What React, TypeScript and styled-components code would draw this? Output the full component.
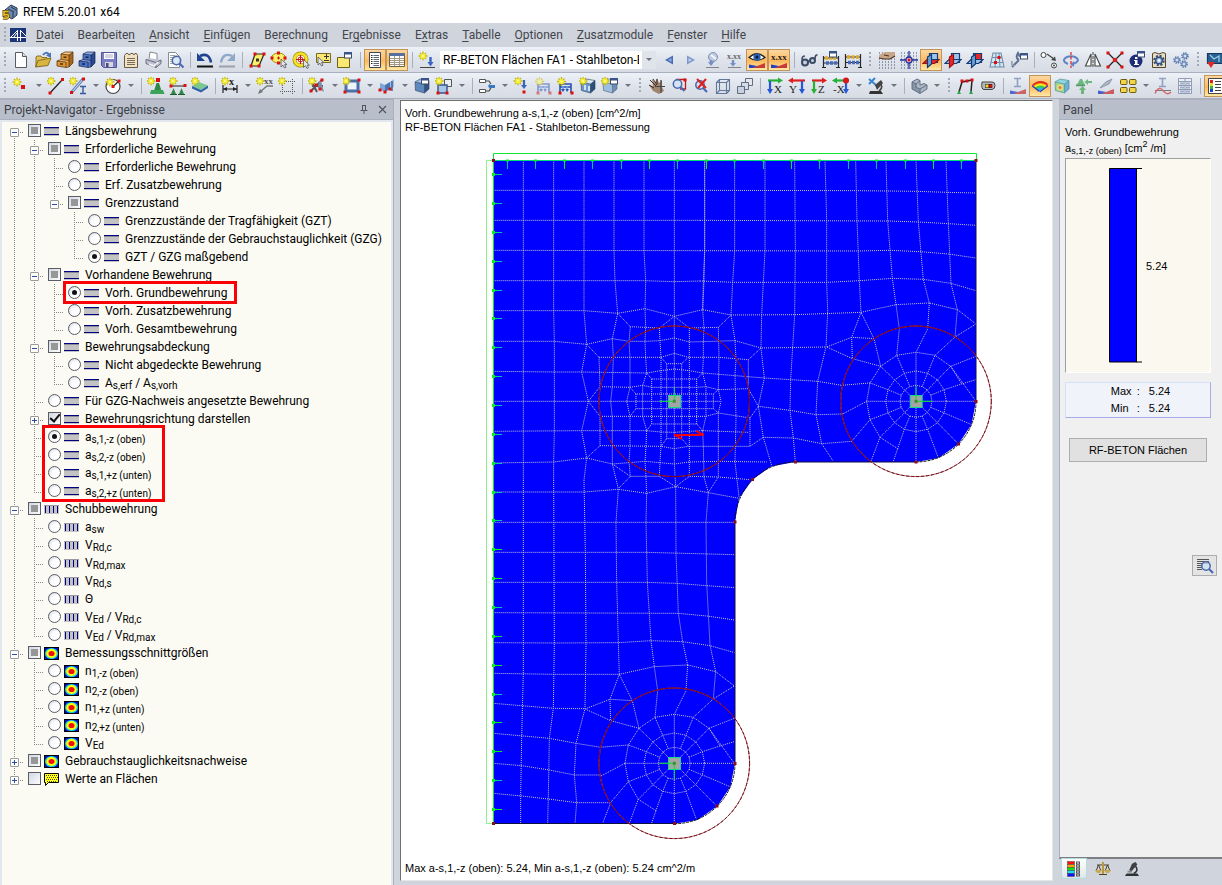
import React, { Fragment, ReactNode } from "react";
import styled, { createGlobalStyle, css } from "styled-components";

const UI_FONT = 'Roboto, "Noto Sans", sans-serif';
const PLAIN_FONT = '"Liberation Sans", Arial, sans-serif';

const GlobalStyle = createGlobalStyle`
  * { box-sizing: border-box; }
  html, body, #root { height: 100%; }
  body { margin: 0; background: #cfd4dd; font: 12px/18px ${UI_FONT}; color: #000; overflow: hidden; }
  button, input, select { font: inherit; color: inherit; margin: 0; }
`;

/* ---------- frame ---------- */

const Window = styled.div`
  display: flex;
  flex-direction: column;
  height: 100vh;
  min-height: 600px;
`;

const TitleBar = styled.header`
  display: flex;
  align-items: center;
  gap: 5px;
  height: 23px;
  padding-left: 2px;
  background: #fff;
  flex: none;
`;

const Title = styled.h1`
  margin: 0;
  font-size: 12px;
  line-height: 18px;
  font-weight: 400;
`;

const Grip = styled.span<{ $wide?: boolean }>`
  flex: none;
  width: ${(p) => (p.$wide ? 12 : 10)}px;
  height: 16px;
  padding-left: ${(p) => (p.$wide ? 5 : 4)}px;
  &::before {
    content: "";
    display: block;
    width: 2px;
    height: 16px;
    background: repeating-linear-gradient(to bottom, #a3a9b6 0 2px, transparent 2px 4px);
  }
`;

const MenuBar = styled.nav`
  display: flex;
  align-items: center;
  height: 24px;
  flex: none;
  background: #cfd4dd;
`;

const MenuItem = styled.button`
  border: 0;
  padding: 0;
  margin-right: 14px;
  background: none;
  color: #43454b;
  line-height: 18px;
  white-space: nowrap;
  u { text-underline-offset: 2px; }
`;

const MenuLogo = styled.span`
  display: flex;
  margin-right: 10px;
`;

const ToolBar = styled.div`
  display: flex;
  align-items: center;
  height: 26px;
  flex: none;
  overflow: hidden;
  border-bottom: 1px solid #aab0bd;
  background: linear-gradient(#edf1f8, #dfe4ec 50%, #d6dbe4);
`;

const ToolButton = styled.button<{ $active?: boolean }>`
  display: flex;
  align-items: center;
  justify-content: center;
  flex: none;
  width: 22px;
  height: 22px;
  padding: 0;
  border: 1px solid transparent;
  background: none;
  ${(p) =>
    p.$active &&
    css`
      border-color: #c2935a;
      background: linear-gradient(#fbd7a0, #fdb95c 55%, #ffe9a6);
    `}
`;

const DropButton = styled.button`
  display: flex;
  align-items: center;
  justify-content: center;
  flex: none;
  width: 13px;
  height: 22px;
  padding: 0;
  border: 0;
  background: none;
`;

const Caret = styled.span`
  border: 3px solid transparent;
  border-top-color: #70747c;
  border-bottom: 0;
`;

const Separator = styled.span`
  flex: none;
  width: 8px;
  height: 16px;
  padding-left: 4px;
  &::before {
    content: "";
    display: block;
    width: 1px;
    height: 16px;
    background: #a9afbb;
  }
`;

const Combo = styled.label`
  display: flex;
  align-items: center;
  flex: none;
  width: 216px;
  height: 18px;
  margin: 0 2px;
  background: #fff;
`;

const ComboSelect = styled.select`
  appearance: none;
  width: 202px;
  height: 18px;
  padding: 0 3px;
  border: 0;
  background: #fff;
  line-height: 18px;
`;

const ComboArrow = styled.span`
  display: flex;
  align-items: center;
  justify-content: center;
  flex: 1;
  height: 18px;
  background: #dfe3ea;
`;

const Workspace = styled.main`
  display: flex;
  flex: 1;
  min-height: 0;
`;

/* ---------- navigator ---------- */

const Navigator = styled.aside`
  display: flex;
  flex-direction: column;
  flex: none;
  width: 394px;
  border-right: 1px solid #aab0bd;
`;

const PaneHeader = styled.div`
  display: flex;
  align-items: center;
  gap: 10px;
  height: 21px;
  flex: none;
  padding: 0 6px 0 4px;
  border-top: 1px solid #aab0bd;
  border-bottom: 1px solid #a9b0c0;
  background: #b8bfcb;
  color: #3c4048;
`;

const PaneTitle = styled.h2`
  flex: 1;
  margin: 0;
  font-size: 12px;
  line-height: 18px;
  font-weight: 400;
  white-space: nowrap;
`;

const PaneButton = styled.button`
  display: flex;
  padding: 0;
  border: 0;
  background: none;
`;

const TreePane = styled.div`
  position: relative;
  flex: 1;
  min-height: 0;
  overflow: hidden;
  border: 2px solid #e3e7f0;
  border-bottom: 0;
  background: #fcfbf3;
`;

const TreeList = styled.ul`
  margin: 0;
  padding: 0 0 0 2px;
  list-style: none;
`;

const TreeRow = styled.li`
  display: flex;
  align-items: center;
  height: 18px;
`;

const DOT_V = "repeating-linear-gradient(to bottom, #8a8a8a 0 1px, transparent 1px 2px)";
const DOT_H = "repeating-linear-gradient(to right, #8a8a8a 0 1px, transparent 1px 2px)";

const Guide = styled.span<{ $line: "none" | "full" | "half" | "lower"; $arm?: boolean }>`
  display: flex;
  align-items: center;
  justify-content: center;
  flex: none;
  width: 20px;
  height: 18px;
  padding-left: 1px;
  padding-top: 2px;
  background-repeat: no-repeat;
  background-image: ${(p) =>
    [p.$line === "none" ? "" : DOT_V, p.$arm ? DOT_H : ""].filter(Boolean).join(", ") || "none"};
  background-size: ${(p) =>
    [p.$line === "none" ? "" : p.$line === "full" ? "1px 18px" : "1px 10px", p.$arm ? "10px 1px" : ""]
      .filter(Boolean)
      .join(", ") || "auto"};
  background-position: ${(p) =>
    [p.$line === "none" ? "" : p.$line === "lower" ? "10px 10px" : "10px 0", p.$arm ? "10px 10px" : ""]
      .filter(Boolean)
      .join(", ") || "0 0"};
`;

const Expander = styled.button`
  display: flex;
  width: 9px;
  height: 9px;
  padding: 0;
  border: 1px solid #9a9a9a;
  border-radius: 1px;
  background: #fff;
`;

const NodeLabel = styled.label`
  display: flex;
  align-items: center;
  height: 18px;
  padding-left: 4px;
`;

const NodeText = styled.span`
  padding-left: 6px;
  white-space: nowrap;
`;

const Low = styled.small`
  position: relative;
  top: 2px;
  font-size: 10px;
  line-height: 10px;
`;

const markBase = css`
  appearance: none;
  display: flex;
  align-items: center;
  justify-content: center;
  flex: none;
  width: 13px;
  height: 13px;
  margin: 0 3px 2px 0;
  border: 1px solid #5a5c66;
`;

const CheckMark = styled.input<{ $mixed?: boolean }>`
  &&{ ${markBase} }
  background: linear-gradient(135deg, #d3d8e2, #fbfcfe);
  ${(p) =>
    p.$mixed &&
    css`
      &::after { content: ""; width: 7px; height: 7px; background: #979797; }
    `}
  &:checked::after {
    content: "";
    width: 4px;
    height: 8px;
    margin-top: -2px;
    border: solid #111;
    border-width: 0 2px 2px 0;
    rotate: 40deg;
  }
`;

const RadioMark = styled.input`
  &&{ ${markBase} }
  border-radius: 50%;
  background: radial-gradient(circle at 65% 65%, #fff 40%, #cdd3de);
  &:checked::after { content: ""; width: 5px; height: 5px; border-radius: 50%; background: #111; }
`;

const Highlight = styled.span<{ $row: number; $rows: number; $left: number; $width: number }>`
  position: absolute;
  top: ${(p) => p.$row * 18 - 3}px;
  left: ${(p) => p.$left}px;
  width: ${(p) => p.$width}px;
  height: ${(p) => p.$rows * 18 + 5}px;
  border: 3px solid #fb0007;
  pointer-events: none;
`;

/* ---------- model view ---------- */

const View = styled.section`
  display: flex;
  flex-direction: column;
  flex: 1;
  min-width: 0;
  margin: 1px 6px 4px 6px;
  border: 1px solid #6f6f6f;
  border-right-color: #e6e6e6;
  border-bottom-color: #e6e6e6;
  background: #fff;
  font: 11px/14px ${PLAIN_FONT};
`;

const ViewCaption = styled.p`
  margin: 0;
  padding: 5px 4px 0;
  white-space: pre-line;
`;

const ViewFooter = styled.p`
  margin: 0;
  padding: 0 4px 5px;
`;

const Drawing = styled.div`
  flex: 1;
  min-height: 0;
  padding: 11px 0 0 79px;
  svg { display: block; max-width: 100%; }
`;

/* ---------- result panel ---------- */

const Panel = styled.aside`
  display: flex;
  flex-direction: column;
  flex: none;
  width: 163px;
`;

const PanelBody = styled.div`
  display: flex;
  flex-direction: column;
  flex: 1;
  min-height: 0;
  padding: 4px 11px 0 5px;
  border-left: 1px solid #a9b0c0;
  border-bottom: 2px solid #7d7f84;
  background: #f0f0f0;
  font: 11px/16px ${PLAIN_FONT};
`;

const Quantity = styled.p`
  margin: 0;
  height: 16px;
  line-height: 16px;
  white-space: nowrap;
  small, sup { font-size: 9px; line-height: 9px; }
`;

const Legend = styled.div`
  display: flex;
  align-items: center;
  height: 215px;
  margin-top: 2px;
  padding-left: 43px;
  gap: 4px;
  border: 1px solid #a0a0a0;
  border-right-color: #fff;
  border-bottom-color: #fff;
  background: #fbf8f0;
`;

const Extremes = styled.dl`
  display: grid;
  grid-template-columns: 26px 12px auto;
  justify-content: center;
  align-content: center;
  height: 36px;
  margin: 9px 0 0;
  padding-left: 5px;
  border: 1px solid #d6e0f8;
  border-right-color: #a9a9ee;
  border-bottom-color: #a9a9ee;
  background: #f0f3fa;
  line-height: 17px;
  dd, dt { margin: 0; }
`;

const ModuleButton = styled.button`
  height: 24px;
  margin: 20px 4px 0;
  padding: 0;
  border: 1px solid #adadad;
  background: #e1e1e1;
`;

const FilterButton = styled.button`
  display: flex;
  align-items: center;
  justify-content: center;
  align-self: flex-end;
  width: 25px;
  height: 21px;
  margin: 93px -6px 0 0;
  padding: 0;
  border: 1px solid #adadad;
  background: #e4e4e4;
`;

const PanelTabs = styled.div`
  display: flex;
  align-items: flex-start;
  gap: 5px;
  height: 26px;
  flex: none;
  padding-left: 3px;
`;

const PanelTab = styled.button<{ $active?: boolean }>`
  display: flex;
  align-items: center;
  justify-content: center;
  width: 24px;
  height: 19px;
  padding: 0;
  border: 0;
  border-radius: 0 0 3px 3px;
  background: ${(p) => (p.$active ? "linear-gradient(#fff, #dfe6ea)" : "none")};
  ${(p) => p.$active && css`box-shadow: 0 0 0 1px #b4dcdc;`}
`;

/* ---------- icons ---------- */

const L = (d: string, c: string, w = 1, f = "none") => <path d={d} stroke={c} strokeWidth={w} fill={f} />;
const F = (d: string, f: string) => <path d={d} fill={f} />;
const Node = ({ x, y, c = "#dc1010" }: { x: number; y: number; c?: string }) => (
  <rect x={x - 1.5} y={y - 1.5} width="3" height="3" fill={c} />
);
const Star = ({ x = 4.5, y = 4.5 }: { x?: number; y?: number }) => (
  <g transform={`translate(${x} ${y})`}>
    <path d="M0-4.5V4.5M-4.5 0H4.5M-3-3L3 3M3-3L-3 3" stroke="#c2b400" strokeWidth="1.3" />
    <circle r="2.6" fill="#f7ee2a" />
    <circle r="1" fill="#fffbb0" />
  </g>
);
const Letters = ({ x, y, c = "#222", s = 7, bold = true, children }: { x: number; y: number; c?: string; s?: number; bold?: boolean; children: string }) => (
  <text x={x} y={y} fill={c} fontSize={s} fontWeight={bold ? 700 : 400} fontFamily="Liberation Serif, serif">
    {children}
  </text>
);
const Cursor = ({ x, y }: { x: number; y: number }) => (
  <path transform={`translate(${x} ${y})`} d="M0 0V8L2 6.2L3.5 9L5 8.2L3.6 5.6H6Z" fill="#e4e4e8" stroke="#555" strokeWidth=".8" />
);
const Ramp = () => (
  <>
    {F("M1 17V13.5L9 15Z", "#2440c8")}
    {F("M9 15L17 12V17H1Z", "#c83a3a")}
    {F("M1 14.5L9 15.5L4 17H1Z", "#2440c8")}
  </>
);
const Lens = ({ x, y }: { x: number; y: number }) => (
  <>
    <circle cx={x} cy={y} r="4.2" fill="#cfe0f6" fillOpacity=".75" stroke="#4a68a8" strokeWidth="1.5" />
    <path d={`M${x + 3} ${y + 3}L${x + 7} ${y + 7}`} stroke="#4a68b8" strokeWidth="2.2" />
  </>
);
const Cube = ({ top, left, right }: { top: string; left: string; right: string }) => (
  <>
    {F("M2 5L7 2L16 3.5L11.5 7Z", top)}
    {F("M2 5L11.5 7V16L2.5 13.5Z", left)}
    {F("M11.5 7L16 3.5V12L11.5 16Z", right)}
    {L("M2 5L7 2L16 3.5V12L11.5 16L2.5 13.5ZM2 5L11.5 7L16 3.5M11.5 7V16", "#2c3c58", 0.6)}
  </>
);
/* filing cabinet with two drawers, the lower one pulled out */
const Cabinet = ({ top, front, side, line }: { top: string; front: string; side: string; line: string }) => (
  <>
    {F("M5 3L9 1H17L13 4Z", top)}
    {F("M5 3L13 4V16L5 15Z", front)}
    {F("M13 4L17 1V12L13 16Z", side)}
    {F("M1 10L5 8.500L11 9.500V16.500L1 15Z", front)}
    {F("M1 10L5 8.500L13 9.500L10 11Z", top)}
    {L("M5 8V3L9 1H17V12L13 16L10 16.500L1 15V10L5 8.500L13 9.500M5 3L13 4L17 1M13 4V16M1 10L10 11V16.500", line, 0.7)}
    {L("M7.500 6.300H10.500M4 13H7", line, 1.6)}
  </>
);
const WinMark = ({ x = 9, y = 1 }: { x?: number; y?: number }) => (
  <>
    <rect x={x + 0.5} y={y + 0.5} width="7" height="5.5" fill="#fff" stroke="#3b4a6a" />
    <rect x={x} y={y} width="8" height="2.5" fill="#3c5588" />
  </>
);
/* three crossing work planes, one of them marked red */
const Planes = ({ hot }: { hot: number }) => (
  <>
    {L("M7.500 2.500H15.500V11.500H7.500Z", "#143a74", 1.2, hot === 2 ? "#e82828" : "#9cc4ec")}
    {L("M1 12.500L5 8.500H17L12.500 12.500Z", hot === 0 ? "#a01010" : "#143a74", 1.2, hot === 0 ? "#e82828" : "#9cc4ec")}
    {L("M5.500 6L9.500 3.500V13L5.500 16.500Z", hot === 1 ? "#a01010" : "#143a74", 1.2, hot === 1 ? "#e82828" : "#6c9fd8")}
    {L("M9.500 8.500H17", "#143a74", 1)}
  </>
);
const Gear = ({ x, y, r, c = "#5878ac" }: { x: number; y: number; r: number; c?: string }) => (
  <g transform={`translate(${x} ${y})`}>
    <circle r={r} fill="none" stroke={c} strokeWidth={r * 0.55} strokeDasharray={`${r * 0.45} ${r * 0.335}`} />
    <circle r={r * 0.72} fill="#a9bfe0" stroke={c} strokeWidth={r * 0.3} />
    <circle r={r * 0.28} fill="#fff" />
  </g>
);
const Axis = ({ name, flip, across, down, downX = 4 }: { name: string; flip?: boolean; across: string; down: string; downX?: number }) => (
  <>
    {L(flip ? "M17 3.500H4" : "M2 3.500H13", across, 2.2)}
    {F(flip ? "M5 .5V6.500L0 3.500Z" : "M12 .5V6.500L17 3.500Z", across)}
    {L(`M${downX} 4V13`, down, 2.2)}
    {F(`M${downX - 3} 12H${downX + 3}L${downX} 17Z`, down)}
    <Letters x={flip ? 1 : 8} y={16} s={11} bold={false}>{name}</Letters>
  </>
);
const Grid = ({ c = "#44506c" }: { c?: string }) => (
  <path d="M1 2H17M1 5H17M1 8H17M1 11H17M1 14H17M1 17H17" stroke={c} strokeDasharray="1 2" />
);
const Supports = ({ y = 10 }: { y?: number }) => (
  <>
    {F(`M2 ${y + 6}L4.5 ${y}L7 ${y + 6}ZM10 ${y + 6}L12.5 ${y}L15 ${y + 6}Z`, "#2f8a46")}
    {L(`M1 ${y + 6.5}H8M9 ${y + 6.5}H16`, "#1b5c2c")}
  </>
);
const LoadFrame = ({ soft }: { soft?: boolean }) => (
  <g opacity={soft ? 0.5 : 1}>
    {L("M3 16V7H14V16M3 10H14", "#2a50b0", 1.6)}
    {L("M6 9V13M10 9V13", "#6aa0ea", 1.5)}
    {F("M4 12H8L6 15ZM8.500 12H12L10 15Z", "#2a50b0")}
    <Node x={3} y={16} /><Node x={15} y={16} />
    <Star />
  </g>
);
const Microscope = () => (
  <>
    {F("M9 3L13 1L15 4L8 12L6 10Z", "#3d3f44")}
    {L("M13 6Q17 11 11 14", "#303236", 1.8)}
    {F("M3 14H15L17 17H1Z", "#303236")}
    {F("M4 11H9V13H4Z", "#8a8c92")}
  </>
);
const IBeam = ({ c = "#7688b8" }: { c?: string }) => L("M5 1.500H12M5 9.500H12M8.500 2V9", c, 1.6);

const GREEN = "#28b038";
const RED = "#dc2020";
const BLUE = "#2858d8";

const icons: Record<string, ReactNode> = {
  new: <>{L("M3.500 1.500H10.500L14.500 5.500V16.500H3.500Z", "#5a5c60", 1, "#fff")}{L("M10.500 1.500V5.500H14.500", "#5a5c60", 1, "#dfe3ea")}</>,
  open: <>{F("M2 16V6L3 5H7L8 6.500H14V9H6Z", "#e3c45c")}{F("M1 16L4 9.500L17 7L14 14.500Z", "#d9b440")}{L("M2 16V6L3 5H7L8 6.500H13M1.500 16L4 9.500L17 7L14 14.500Z", "#7c6418", 0.9)}{L("M9 4Q12 0 15 3.500", "#4a74b8", 2)}{F("M12 4.500L17 1.500V7Z", "#4a74b8")}</>,
  archiveOrange: <Cabinet top="#f6c888" front="#dd9434" side="#a8661c" line="#4c2c08" />,
  archiveBlue: <Cabinet top="#8fabe4" front="#4f74c4" side="#2c4a94" line="#12244c" />,
  save: <>{L("M1.500 1.500H16.500V16.500H3.500L1.500 14.500Z", "#54549a", 1, "#7d7dc6")}{F("M4 2H14V8H4Z", "#fff")}{L("M5 4H13M5 6H13", "#a9a9c8")}{F("M5 11H13V16H5Z", "#d6d6de")}{F("M6 12H8.500V16H6Z", "#4a4a78")}</>,
  tabs: <>{L("M2.500 4.500L4 2.500H6L7 4L9 2.500H11L12 4L13 2.500H14.500L15.500 4.500V16.500H2.500Z", "#6c5a40", 1, "#f1e2c4")}{L("M5 7.500H13M5 9.500H13M5 11.500H13M5 13.500H13", "#7a6a58")}</>,
  print: <>{L("M5 8L6 1L13 2.500L13 9", "#6c6c76", 0.8, "#fff")}{F("M2 8.500L5 7L17 9V12.500L12 16.500L2 12.500Z", "#c2c2d4")}{L("M2 8.500L12 11.500L17 9V12.500L12 16.500L2 12.500ZM12 11.500V16.500", "#54545e", 0.8)}{L("M5 13L10 15L14 11", "#f4f4fc", 1.6)}</>,
  preview: <>{L("M2.500 1.500H9.500L13.500 5.500V16.500H2.500Z", "#8a8c90", 1, "#fff")}{L("M4 4.500H9M4 6.500H11M4 8.500H7M4 10.500H7M4 12.500H7", "#a0a4ac")}<Lens x={10.500} y={9.500} /></>,
  undo: <>{L("M4 5Q13 1 15 11.500", "#1f4390", 2.6)}{F("M1 2V10H9Z", "#1f4390")}{L("M1 15.500H17", "#111", 2)}</>,
  redo: <>{L("M14 5Q5 1 3 11.500", "#8fa9c8", 2.4)}{F("M17 2V10H9Z", "#8fa9c8")}{L("M1 15.500H17", "#9aa2ae", 2)}</>,
  selPoly: <>{L("M3 15L7 3H16L11 15Z", "#222", 1.2, "#fdf06a")}<Node x={3} y={15} /><Node x={7} y={3} /><Node x={16} y={3} /><Node x={11} y={15} /><Node x={9.500} y={9} c="#333" /></>,
  selEllipse: <><ellipse cx="8.500" cy="7" rx="7" ry="5" fill="#fdf06a" stroke="#a08c00" /><Node x={2} y={7} /><Node x={8.500} y={2} /><Node x={15} y={7} /><Node x={8.500} y={12} />{L("M7 7H10M8.500 5.500V8.500", "#c01010")}<Cursor x={11} y={8} /></>,
  selRing: <><circle cx="8.500" cy="8.500" r="6" fill="#fff" stroke="#9c8a00" strokeWidth="4" /><circle cx="8.500" cy="8.500" r="6" fill="none" stroke="#f5e22a" strokeWidth="2.600" />{L("M8.500 4V13M4 8.500H13", "#d01818")}<circle cx="8.500" cy="8.500" r="2.500" stroke="#d01818" /><Cursor x={11.500} y={8.500} /></>,
  selSign: <>{L("M2.500 2.500H16.500V11.500H2.500Z", "#7a6c1c", 1, "#f9e874")}{L("M10 5.500H15M12.500 3V8M10 9.500H15", "#333")}<Cursor x={4} y={6} /></>,
  selWindow: <>{L("M1.500 6.500H13.500V16.500H1.500Z", "#6e6018", 1, "#f9e874")}<WinMark x={8} y={1} /></>,
  navList: <>{L("M3.500 1.500H14.500V16.500H3.500Z", "#3e4452", 1, "#fff")}{L("M7.500 4.500H13M7.500 6.500H13M7.500 8.500H13M7.500 10.500H13M7.500 12.500H13M7.500 14.500H13", "#5b6270")}{L("M5 4.500H6.500M5 6.500H6.500M5 8.500H6.500M5 10.500H6.500M5 12.500H6.500", "#222")}</>,
  table: <>{L("M1.500 2.500H16.500V15.500H1.500Z", "#6a604c", 1, "#fff")}{F("M1 2H17V5H1Z", "#5870a0")}{L("M2 7.500H16M2 9.500H16M2 11.500H16M2 13.500H16M6.500 5V15M11.500 5V15", "#a49880")}</>,
  newCase: <><Star x={5} y={5} />{L("M12.500 6V13", "#3a64c0", 2.4)}{F("M9.500 11H15.500L12.500 15.500Z", "#3a64c0")}{L("M2 16.500H17", "#444")}</>,
  prev: <>{F("M13 4.500V13.500L5 9Z", "#4a6cb8")}{F("M11.500 7V11L8 9Z", "#8faade")}</>,
  next: <>{F("M5 4.500V13.500L13 9Z", "#7c98cc")}{F("M6.500 7V11L10 9Z", "#c2d0ea")}</>,
  caseDown: <g opacity=".65"><circle cx="9" cy="6" r="4.500" fill="#a8bcdc" stroke="#4a6490" /><path d="M7 4L12 8" stroke="#fff" strokeWidth="2" />{L("M7 9V13", "#3c64b4", 2.4)}{F("M4 11H10L7 15Z", "#3c64b4")}{L("M2 16.500H15", "#555")}</g>,
  valueDown: <g opacity=".65"><Letters x={1} y={8} s={8}>x.xx</Letters>{L("M7 9V13", "#3c64b4", 2.4)}{F("M4 12H10L7 15.500Z", "#3c64b4")}{L("M2 16.500H15", "#555")}</g>,
  eye: <>{L("M1 6.500Q9 -1 17 6.500Q9 12 1 6.500Z", "#222", 1.2, "#fff")}<circle cx="9" cy="6.200" r="3.600" fill="#2860b4" /><circle cx="9" cy="6" r="1.500" fill="#081830" /><Ramp /></>,
  values: <><Letters x={1} y={9} s={9}>x.xx</Letters><Ramp /></>,
  glasses: <><circle cx="5" cy="11.500" r="3" fill="#c8d0dc" stroke="#3c4a64" strokeWidth="2" /><circle cx="12.500" cy="9.500" r="2.500" fill="#c8d0dc" stroke="#3c4a64" strokeWidth="2" />{L("M2.500 10Q1 5 5 5M8 10.500L10 9.500M15 8Q15 3.500 17.500 4", "#3c4a64", 1.6)}</>,
  abacusWin: <>{L("M1.500 5V16M16.500 5V16M1 7H17M1 12H17M0 16.500H4M14 16.500H18", "#26282e", 1.2)}<path d="M3 7H14" stroke="#dca92c" strokeWidth="3.400" strokeDasharray="3 1" /><path d="M4 12H15" stroke="#4868b8" strokeWidth="3.600" strokeDasharray="3 1" /><WinMark x={7} y={0} /></>,
  abacus: <>{L("M1.500 3V16M16.500 3V16M1 6H17M1 11.500H17M0 16.500H4M14 16.500H18", "#26282e", 1.2)}<path d="M3 6H15" stroke="#dca92c" strokeWidth="3.400" strokeDasharray="3 1.500" /><path d="M4 11.500H15" stroke="#4868b8" strokeWidth="3.600" strokeDasharray="3 1" /></>,
  handGrid: <><Grid />{F("M1 4L7 1H17V5L12 8H6L1 7Z", "#c8a68a")}{L("M1 7L6 8H12L17 5M6 4L11 5", "#4a3422", 1.2)}</>,
  snapGrid: <><Grid />{L("M9 0V18M0 9H18", "#2030a0", 1.3)}<circle cx="9" cy="9" r="3" fill="#fff" stroke="#2030a0" strokeWidth="1.300" /><Node x={9} y={9} /></>,
  planeXY: <Planes hot={0} />,
  planeYZ: <Planes hot={1} />,
  planeXZ: <Planes hot={2} />,
  meshGrid: <>{L("M2 16L5 2H13L16 16ZM3 11.500H15M4 6.500H14M8 2L7 16M11 2L12 16", "#6f8cac", 1.1, "#d4e8f0")}<Node x={11} y={6.500} /><Node x={7.500} y={11.500} /></>,
  wrench: <>{L("M2 16L9 9M9 9Q5 7 8 2L9.500 5L12 4", "#5f7090", 2)}{L("M2 10Q1 16 5 14", "#8a9ab4", 1.500)}<WinMark x={10} y={2} /></>,
  copy: <><circle cx="3.500" cy="4" r="2.500" fill="#fff" stroke="#444" /><circle cx="14" cy="14.500" r="2.500" fill="#fff" stroke="#444" /><circle cx="14" cy="14.500" r="1" fill="#444" />{L("M7 3L14 8", "#444", 1.2)}{F("M16 10L11 9L15 5.500Z", "#444")}</>,
  rotate: <>{L("M6 13Q-1 10 4 6.500Q9 4 14 6.500Q19 10 11 13", "#6483c4", 2)}{F("M12 10V16L8.500 13.500Z", "#6483c4")}<path d="M9 1V17" stroke="#dc2020" strokeWidth="1.200" strokeDasharray="3 1.500" /></>,
  mirror: <>{L("M7 3V15H1.500Z", "#444", 1.1, "#fff")}{L("M11 3V15H16.500Z", "#444", 1.1, "#fff")}<path d="M9 1V17" stroke="#444" strokeDasharray="3 1" /></>,
  cross: <>{L("M2 2L16 16M16 2L2 16", "#222", 1.3)}<Node x={2} y={2} /><Node x={16} y={2} /><Node x={2} y={16} /><Node x={16} y={16} /><circle cx="9" cy="9" r="2.300" fill="#e02020" /></>,
  info: <><circle cx="8" cy="10" r="6.500" fill="#1c2c78" />{F("M7 6H9.500V8H7ZM6 9H9.500V13H11V14H6V13H7V10H6Z", "#fff")}<WinMark x={9} y={0} /></>,
  gearPage: <>{L("M2.500 2.500L5 1.500L9 3L13 1.500L15.500 2.500V16.500H2.500Z", "#54482c", 1, "#eadfc4")}<Gear x={9} y={9.500} r={4.500} c="#34507c" /></>,
  gears: <><Gear x={5} y={9} r={3} /><Gear x={13} y={5} r={3} /><Gear x={12} y={13} r={3} /></>,
  monitor: <>{L("M1.500 2.500H17V12.500H1.500Z", "#183860", 1.2, "#2a6090")}{L("M4 4L8 8L13 5V11", "#9cd0ee", 1.2)}{F("M1 11H9L5 17Z", "#dc2a2a")}</>,

  newNode: <><Star x={5} y={5} /><rect x="9" y="8" width="4" height="4" fill="#dc1010" /></>,
  newLine: <><Star x={4} y={4} />{L("M3 16L15.500 2.500", "#222", 1.3)}<Node x={3} y={16} /><Node x={15.500} y={2.500} /></>,
  newMember: <>{L("M3 15L14 2", "#6c86b8", 3)}{L("M3 15L14 2", "#cfe0f6")}<Star x={4} y={4} /><Node x={2.500} y={15.500} /><Node x={14.500} y={2} />{L("M11 9.500H17M11 16.500H17M14 10V16", "#38589c", 1.4)}</>,
  newArc: <><circle cx="9" cy="9.500" r="7" fill="#fff" stroke="#444" strokeWidth="1.200" />{L("M9 9.500L15 4", "#222", 1.2)}<Star x={6} y={5} /><Node x={9} y={9.500} /><Node x={15} y={4} /></>,
  nodeSupport: <>{F("M7 14L9.500 6H12L14.500 14Z", "#2f8a46")}{F("M4 13H16L17.500 17H3Z", "#3aa457")}<rect x="9" y="1" width="4" height="4" fill="#dc1010" /><Star x={4} y={4} /></>,
  lineSupport: <><Star x={4} y={4} />{L("M2 9H16", "#222")}<Supports y={11} /><Node x={2} y={9} /><Node x={16} y={8.500} /></>,
  surface: <>{F("M1 9L8 5L17 8.500L10 13Z", "#78c890")}{F("M1 9L10 13V15.500L1 11.500ZM10 13L17 8.500V11L10 15.500Z", "#2f62a8")}<Star x={4} y={4} /></>,
  dimension: <>{L("M2 8V16M16 8V16M2 12H16", "#222", 1.2)}{F("M2 12L6 10V14ZM16 12L12 10V14Z", "#222")}<Star x={4} y={4} /><Letters x={8} y={8} s={10}>x</Letters></>,
  annotate: <><Star x={4} y={4} /><Letters x={8} y={7} s={9} c="#555">xx</Letters>{L("M17 9H11L4 15", "#777", 1.3)}{F("M2 17L4 12L7 15Z", "#777")}</>,
  guideGrid: <><path d="M4.500 2V17M14.500 2V17M2 4.500H17M2 14.500H17" stroke="#555" strokeDasharray="1 1" /><Star x={4} y={4} /></>,
  cluster: <>{L("M3 4L9 15M3 14L14 3M4 9H15", "#555", 2)}{F("M11 4L13 4L16 15L10 11Z", "#7c90ac")}<Star x={4} y={4} /><Node x={8} y={8} /><Node x={3} y={14} /><Node x={12} y={12} /><Node x={14} y={3} /></>,
  opening: <>{L("M3 4H15V14H3Z", "#4a70a8", 3, "#eef4fc")}<Star x={3} y={4} /><Node x={2} y={15} /><Node x={16} y={15} /><Node x={16} y={3} /></>,
  plates: <>{F("M2 6L7 8V15L2 13Z", "#7fa6d8")}{F("M7 8L12 5V12L7 15Z", "#4a74b0")}{F("M12 5L16 2V10L12 12Z", "#9cc0e6")}<Node x={2} y={13} /><Node x={7} y={15} /><Node x={12} y={12} />{L("M14 4V14", "#34548c", 1.3)}</>,
  solid: <><Cube top="#9fc0e4" left="#5d89be" right="#2f5488" /><WinMark x={8} y={1} /></>,
  solidSet: <>{L("M9.500 2.500H16.500V9.500H9.500Z", "#555", 1, "#e8edf4")}{L("M3 8H12V16H3Z", "#34548c", 1.4, "#a9c6e8")}<Star x={4} y={4} /><Node x={3} y={16} /><Node x={12} y={16} /></>,
  connect: <>{L("M1.500 2.500H7.500V5.500H1.500ZM1.500 12.500H7.500V15.500H1.500Z", "#555", 1, "#fff")}{L("M8 4H11L13 7M8 14H11L13 11", "#444", 1.1)}{F("M10 9L12 6.500V8H17V11H12V12Z", "#3a78c4")}</>,
  nodeLoad: <><Star x={5} y={4} />{L("M11 3V9", "#3a64c0", 2.2)}{F("M8 8H14L11 12Z", "#3a64c0")}<Node x={11} y={15} /></>,
  memberLoad: <LoadFrame soft />,
  lineLoad: <LoadFrame />,
  areaLoad: <><Cube top="#d8e8f8" left="#6a98cc" right="#28507c" />{L("M6 8V13M10 9V14", "#fff", 1.4)}<Star x={4} y={4} /></>,
  solidLoad: <><g opacity=".8"><Cube top="#d8e8f8" left="#8fb6de" right="#4f7cac" /></g><WinMark x={9} y={1} /><Star x={4} y={4} /></>,
  hand: <>{F("M4 2L7 6L9 1L11 6L14 3V10L16 14L11 17L5 14L1 8L5 9Z", "#a08570")}{L("M2 3L8 9M5 2L9 8M9 2V7M1 8L6 11", "#3e2c20", 1)}{L("M13 3V16M7 9.500H17", "#444", 1.2)}</>,
  zoomWindow: <>{L("M6 2.500H15.500V12H10", "#c01818", 1.3)}<Lens x={7.500} y={7} /><Node x={15} y={3} /></>,
  zoomOff: <><Lens x={8} y={8} />{L("M5 2L14 11M14 2L6 11", "#dc2020", 2)}</>,
  wireCube: <>{L("M2.500 5.500H12.500V16.500H2.500ZM5.500 2.500H15.500V13.500H5.500ZM2.500 5.500L5.500 2.500M12.500 5.500L15.500 2.500M12.500 16.500L15.500 13.500M2.500 16.500L5.500 13.500", "#64789c", 1.1)}</>,
  stacked: <>{L("M9.500 1.500H16.500V8.500H9.500Z", "#666c78", 1, "#e2e8f2")}{L("M5.500 5.500H12.500V12.500H5.500Z", "#666c78", 1, "#d4ddec")}{L("M1.500 9.500H8.500V16.500H1.500Z", "#666c78", 1, "#c4d0e4")}</>,
  viewX: <Axis name="X" across={GREEN} down={BLUE} />,
  viewY: <Axis name="Y" flip across={RED} down={BLUE} downX={14} />,
  viewZ: <Axis name="Z" across={RED} down={GREEN} />,
  viewMinusX: <><Axis name="-X" flip across={GREEN} down={BLUE} downX={14} /><circle cx="14" cy="3.500" r="3" fill="#d81818" /></>,
  render: <>{L("M2 2L10 9M8 1L2 7", "#3a84cc", 2)}{F("M8 8L14 3L16 6L10 13Z", "#444")}{L("M14 7Q16 11 12 14", "#444", 1.6)}{F("M3 14H14L16 17H2Z", "#333")}</>,
  ghost: <>{F("M2 5L7 2L10 3.500V8L14 6.500L17 8V12L10 16.500L2 12Z", "#aab6c4")}{F("M2 5L6 7V11L10 13V16.500L2 12Z", "#8797aa")}{L("M2 5L7 2L10 3.500V8L14 6.500L17 8V12L10 16.500L2 12ZM10 16.500V12L6 10.500V7L10 3.500M10 12L17 8M2 5L6 7", "#5c6878", 0.9)}</>,

  frame: <>{L("M2 15L5 5L15 3L14 15", "#222", 1.5)}<Node x={5} y={4} /><Node x={15} y={3} />{F("M0 17L2 13L4 17ZM12 17L14 13L16 17Z", "#2fa44a")}<Node x={10} y={4} /></>,
  section: <>{L("M3 5H13Q16 5 16 8.500T13 12.500H5Q2 12.500 3 5Z", "#444", 1, "#b4b8c0")}{F("M6 7H13V11H6Z", "#222")}<Node x={8} y={9} c="#f0d030" /><Node x={12} y={9} /></>,
  memberResult: <g opacity=".75"><IBeam /><Ramp /></g>,
  surfaceResult: <>{F("M1 8Q8 1 16 6L17 8L9 14Z", "#e02818")}{F("M2 9Q8 3.500 16 8L9 14Z", "#f8a820")}{F("M3 9.500Q9 5 15.500 9L9 14Z", "#f4f020")}{F("M4 10.500Q9 7 14 10L9 14Z", "#38c848")}{F("M6 12Q9 9.500 12.500 11.500L9 14Z", "#28b8e0")}{F("M1 8L9 14L8 15L1 9.500ZM9 14L17 8V9.500L9 15.500Z", "#2038c8")}</>,
  solidResult: <>{F("M2 5L7 2L16 3.500L11.500 7Z", "#8cd8e0")}{F("M2 5L11.500 7V16L2.500 13.500Z", "#9ad890")}{F("M11.500 7L16 3.500V12L11.500 16Z", "#6cb0d8")}<circle cx="7" cy="10.500" r="3" fill="#ece07c" /><circle cx="7" cy="10.500" r="1.500" fill="#e07060" />{L("M2 5L7 2L16 3.500V12L11.500 16L2.500 13.500ZM2 5L11.500 7L16 3.500M11.500 7V16", "#4c7c8c", 0.6)}</>,
  reactions: <g opacity=".75">{F("M1 8L3 6L5 2H7L9 6L10 8Z", "#48a858")}{F("M17 4H13V2L9.500 5L13 8V6H17ZM6 17V13H4L7.500 9L11 13H9V17Z", "#48a858")}{L("M1 8.500H10", "#2c7c3c", 1.5)}</g>,
  criteria: <g opacity=".8">{F("M3 11Q8 4 15 2L12 7Z", "#a4acbc")}{L("M3 11Q8 4 15 2L12 7Z", "#6c7894", 0.8)}<Ramp /></g>,
  panels: <>{[[1, 2], [10, 2], [1, 10], [10, 10]].map(([x, y]) => (<Fragment key={`${x}-${y}`}><rect x={x + 0.5} y={y + 0.5} width="6.5" height="5" rx="1" fill="#f2d648" stroke="#6c5a10" /></Fragment>))}</>,
  influence: <g opacity=".75"><IBeam />{L("M1 13.500H17", "#555")}{L("M1 16.500Q5 8 9 13.500T17 15", "#d04848", 1.4)}</g>,
  resultTable: <g opacity=".7">{L("M2.500 1.500H15.500V16.500H2.500ZM2.500 4.500H15.500M2.500 8.500H15.500M2.500 12.500H15.500M9 1V16", "#707e9c", 1, "#eef2fa")}{L("M4 6.500H8M10 6.500H14M4 10.500H8M10 10.500H14M4 14.500H8M10 14.500H14", "#8494bc", 2)}</g>,
  panelToggle: <>{L("M2.500 1.500H16.500V16.500H2.500Z", "#444", 1, "#fff")}{F("M4 3H7V6H4Z", "#e02020")}{F("M4 6H7V9H4Z", "#f0d820")}{F("M4 9H7V12H4Z", "#30b840")}{F("M4 12H7V15H4Z", "#2040d0")}{L("M9 4.500H15M9 7.500H15M9 10.500H15M9 13.500H15", "#444")}</>,
};

const Icon = ({ name }: { name: string }) => (
  <svg width="18" height="18" viewBox="0 0 18 18" fill="none" aria-hidden="true">
    {icons[name]}
  </svg>
);

/* "|" separator, "v" drop-down, "#" grip, "=" combo box, "*" prefix marks a pressed button */
const mainTools =
  "new open archiveOrange archiveBlue save tabs print preview | undo redo | selPoly selEllipse selRing selSign selWindow | *navList *table | newCase = prev next caseDown valueDown *eye *values | glasses abacusWin abacus # handGrid snapGrid *planeXY planeYZ planeXZ meshGrid wrench | copy rotate mirror cross info gearPage gears # monitor";
const modelTools =
  "newNode v newLine newMember v newArc v | nodeSupport lineSupport surface | dimension v annotate guideGrid | cluster v opening v plates v solid solidSet v | connect v nodeLoad memberLoad lineLoad areaLoad solidLoad v # hand zoomWindow zoomOff wireCube stacked | viewX viewY viewZ viewMinusX v render v | ghost v # frame section | memberResult *surfaceResult solidResult reactions criteria panels v influence resultTable | *panelToggle";

const Tools = ({ items }: { items: string }) => (
  <ToolBar role="toolbar">
    <Grip />
    {items.split(" ").map((t, i) => {
      if (t === "|") return <Separator key={i} />;
      if (t === "#") return <Grip key={i} $wide />;
      if (t === "v") return <DropButton key={i} aria-label="Mehr"><Caret /></DropButton>;
      if (t === "=")
        return (
          <Combo key={i}>
            <ComboSelect aria-label="Lastfall" defaultValue="fa1">
              <option value="fa1">RF-BETON Flächen FA1 - Stahlbeton-Bemessung</option>
            </ComboSelect>
            <ComboArrow><Caret /></ComboArrow>
          </Combo>
        );
      const active = t[0] === "*";
      const name = active ? t.slice(1) : t;
      return (
        <ToolButton key={i} $active={active} aria-label={name} aria-pressed={active}>
          <Icon name={name} />
        </ToolButton>
      );
    })}
  </ToolBar>
);

const menus: [string, string, string][] = [
  ["", "D", "atei"], ["Bearbeite", "n", ""], ["", "A", "nsicht"], ["", "E", "infügen"],
  ["Be", "r", "echnung"], ["Er", "g", "ebnisse"], ["E", "x", "tras"], ["", "T", "abelle"],
  ["", "O", "ptionen"], ["", "Z", "usatzmodule"], ["", "F", "enster"], ["", "H", "ilfe"],
];

/* ---------- tree ---------- */

type IconKind = "rebar" | "shear" | "map" | "flag";
interface TreeNode {
  text: string; // "_" before a group lowers it: "A_{s,erf}"
  icon: IconKind;
  kind: "mixed" | "check" | "radio";
  on?: boolean;
  open?: boolean;
  children?: TreeNode[];
}

const radio = (icon: IconKind, text: string, on = false): TreeNode => ({ icon, text, on, kind: "radio" });
const group = (icon: IconKind, text: string, children?: TreeNode[]): TreeNode => ({
  icon, text, kind: "mixed", open: !!children, children: children ?? [],
});

const tree: TreeNode[] = [
  group("rebar", "Längsbewehrung", [
    group("rebar", "Erforderliche Bewehrung", [
      radio("rebar", "Erforderliche Bewehrung"),
      radio("rebar", "Erf. Zusatzbewehrung"),
      group("rebar", "Grenzzustand", [
        radio("rebar", "Grenzzustände der Tragfähigkeit (GZT)"),
        radio("rebar", "Grenzzustände der Gebrauchstauglichkeit (GZG)"),
        radio("rebar", "GZT / GZG maßgebend", true),
      ]),
    ]),
    group("rebar", "Vorhandene Bewehrung", [
      radio("rebar", "Vorh. Grundbewehrung", true),
      radio("rebar", "Vorh. Zusatzbewehrung"),
      radio("rebar", "Vorh. Gesamtbewehrung"),
    ]),
    group("rebar", "Bewehrungsabdeckung", [
      radio("rebar", "Nicht abgedeckte Bewehrung"),
      radio("rebar", "A_{s,erf} / A_{s,vorh}"),
    ]),
    radio("rebar", "Für GZG-Nachweis angesetzte Bewehrung"),
    { icon: "rebar", text: "Bewehrungsrichtung darstellen", kind: "check", on: true, children: [] },
    radio("rebar", "a_{s,1,-z (oben)}", true),
    radio("rebar", "a_{s,2,-z (oben)}"),
    radio("rebar", "a_{s,1,+z (unten)}"),
    radio("rebar", "a_{s,2,+z (unten)}"),
  ]),
  group("shear", "Schubbewehrung", [
    radio("shear", "a_{sw}"),
    radio("shear", "V_{Rd,c}"),
    radio("shear", "V_{Rd,max}"),
    radio("shear", "V_{Rd,s}"),
    radio("shear", "Θ"),
    radio("shear", "V_{Ed} / V_{Rd,c}"),
    radio("shear", "V_{Ed} / V_{Rd,max}"),
  ]),
  group("map", "Bemessungsschnittgrößen", [
    radio("map", "n_{1,-z (oben)}"),
    radio("map", "n_{2,-z (oben)}"),
    radio("map", "n_{1,+z (unten)}"),
    radio("map", "n_{2,+z (unten)}"),
    radio("map", "V_{Ed}"),
  ]),
  group("map", "Gebrauchstauglichkeitsnachweise"),
  { icon: "flag", text: "Werte an Flächen", kind: "check", children: [] },
];

const nodeIcons: Record<IconKind, ReactNode> = {
  rebar: <>{F("M0 2H15V11H0Z", "#c3c3c3")}{F("M0 2H15V3H0ZM0 9H15V10H0Z", "#000080")}{F("M0 3H15V4H0Z", "#8a8a98")}</>,
  shear: <>{F("M0 2H15V11H0Z", "#c3c3c3")}{F("M1 3H2V10H1ZM5 3H6V10H5ZM9 3H10V10H9ZM13 3H14V10H13Z", "#000080")}{F("M0 2H15V3H0Z", "#9a9aa6")}</>,
  map: <>{F("M0 0H15V13H0Z", "#000")}{F("M1 1H14V12H1Z", "#0010c0")}<ellipse cx="7.5" cy="6.5" rx="6.500" ry="5.500" fill="#20d8d8" /><ellipse cx="7.500" cy="6.500" rx="5.200" ry="4.400" fill="#ffff00" /><ellipse cx="7.500" cy="6.500" rx="3" ry="2.600" fill="#f01010" /></>,
  flag: <>{L("M.5.5H14.500V9.500H4.500L1.500 12.500V9.500H.5Z", "#000", 1, "#ffff20")}<path d="M2 2.500H13M3 4.500H14M2 6.500H13M3 8.500H13" stroke="#4c4c00" strokeDasharray="1 1" /></>,
};

const renderText = (text: string) =>
  text.split(/(_\{[^}]*\})/).map((part, i) =>
    part.startsWith("_{") ? <Low key={i}>{part.slice(2, -1)}</Low> : <Fragment key={i}>{part}</Fragment>
  );

const renderNodes = (nodes: TreeNode[], trail: boolean[], path: string): ReactNode =>
  nodes.map((n, i) => {
    const last = i === nodes.length - 1;
    const id = `${path}-${i}`;
    const first = trail.length === 0 && i === 0;
    const isGroup = !!n.children;
    return (
      <Fragment key={id}>
        <TreeRow>
          {trail.map((cont, k) => <Guide key={k} $line={cont ? "full" : "none"} />)}
          <Guide $line={first ? "lower" : last ? "half" : "full"} $arm>
            {isGroup && (
              <Expander aria-label={n.open ? "Zuklappen" : "Aufklappen"} aria-expanded={!!n.open}>
                <svg width="7" height="7" viewBox="0 0 7 7">{F(n.open ? "M1 3H6V4H1Z" : "M1 3H3V1H4V3H6V4H4V6H3V4H1Z", "#2c4ea0")}</svg>
              </Expander>
            )}
          </Guide>
          <NodeLabel>
            {n.kind === "radio" ? (
              <RadioMark type="radio" name={path} defaultChecked={n.on} />
            ) : (
              <CheckMark type="checkbox" $mixed={n.kind === "mixed"} defaultChecked={n.on} />
            )}
            <svg width="15" height="13" viewBox="0 0 15 13" fill="none">{nodeIcons[n.icon]}</svg>
            <NodeText>{renderText(n.text)}</NodeText>
          </NodeLabel>
        </TreeRow>
        {n.open && n.children && renderNodes(n.children, [...trail, !last], id)}
      </Fragment>
    );
  });

/* ---------- finite element mesh ---------- */

const toPath = (lines: string[]) => lines.map((l) => "M" + l).join("");

/* slab field, left and middle part */
const meshLeft = toPath([
  "370,187 370,1146", "461,187 461,640 463,730 463,1000 461,1092 461,1146",
  "552,187 552,640 560,739 545,822 565,910 545,998 560,1080 552,1146",
  "642,187 642,460 645,549 653,646 637,722 640,778 637,866 632,910 637,960 637,1098 655,1172",
  "732,187 732,460 737,549 735,632 737,686 735,730 737,778 740,825 728,862 728,955 740,998 738,1045 735,1090 738,1137 740,1186",
  "823,187 823,1052 823,1098 827,1166",
  "914,187 914,460 912,549 908,635 912,690 910,730 910,778 908,825 918,866 918,955 908,998 910,1045 912,1137 925,1184",
  "280,277 900,277", "280,367 900,367", "280,457 900,458",
  "280,548 732,548 823,551 900,549",
  "280,638 552,638 653,646 735,632 823,655 908,635 993,651",
  "280,730 463,730 560,739 637,722 687,730 735,730 780,728 823,720 868,732 1005,728",
  "653,646 691,686 778,690 823,655 868,690 955,688 993,651",
  "560,739 597,778 783,778 823,766 865,778 955,778 1045,785",
  "280,820 463,822 545,822 740,825 783,818 823,813 868,818 908,825 1093,840",
  "597,778 600,866 565,910 600,955 600,1043 560,1080",
  "600,866 690,868 728,862 755,868 890,868 918,866 955,875 1045,872",
  "280,910 960,910", "600,955 690,955 918,955 955,945 1050,960",
  "280,1000 545,998 740,998 783,1002 823,1003 868,1000 908,998 1045,1003",
  "280,1095 461,1092 560,1080 637,1098 735,1090 823,1098 868,1092 955,1090 1100,1092",
  "600,1043 783,1045 823,1052 865,1045 1050,1045",
  "637,1098 691,1135 778,1135 827,1166 868,1135 955,1137 1050,1145",
  "691,686 687,730 690,778 690,868 680,910 690,955 690,1045 687,1092 691,1135 655,1172",
  "955,688 957,778 955,875 963,910 955,945 955,1137 925,1184",
  "778,690 780,728 783,778 783,1045 780,1092 778,1135", "868,690 868,1135",
  "783,778 800,797 845,797 865,778", "800,797 800,1022 845,1022 845,797",
  "783,1045 800,1022", "845,1022 865,1045",
  "740,825 755,843 890,843 908,825", "755,843 755,978 890,978 890,843", "740,998 755,978", "908,998 890,978",
  "690,868 708,888 940,888 955,875", "708,888 708,932 940,932 940,888", "690,955 708,932", "955,945 940,932",
]);

/* slab field, right part */
const meshRight = toPath([
  "14,187 14,460 10,549 8,635", "104,187 104,460 98,553 93,651 105,728 108,785 105,830 108,960 105,1092 117,1197",
  "195,187 195,460 190,553 185,650 183,750 193,840 175,925 190,1018 215,1103",
  "284,187 286,460 284,650 278,747 272,845 270,937 280,1020 286,1092",
  "375,187 380,367 380,553 383,640 378,747 353,850 348,950 365,1037 400,1090",
  "467,187 471,367 478,548 483,643", "558,187 563,369 577,541 588,620",
  "648,187 655,372 670,544 688,615", "738,187 745,377 753,556 772,635",
  "0,277 470,278 650,280 740,283 828,285", "0,367 563,369 655,372 745,377 828,382",
  "0,458 470,459 570,457 660,461 745,468 828,480",
  "0,549 105,553 380,553 480,548 577,541 670,544 753,556 828,578",
  "93,651 285,650 483,643", "105,728 183,750 378,747", "183,750 145,785 145,872 175,925 150,960 150,1045 190,1018",
  "193,840 272,845 353,850 425,862", "175,925 270,937 348,950 430,948", "190,1018 280,1020 365,1037 455,1030",
]);

/* slab field, lower part */
const meshLower = toPath([
  "370,0 370,580 365,775 362,950 362,1030", "461,0 463,490 460,685 448,775 445,950 443,1030",
  "552,0 556,217 558,490 555,686 528,790 523,885 530,968 525,1030",
  "655,28 648,127 650,307 655,487 658,583", "740,40 738,127 742,307 753,482 763,560",
  "827,20 828,217 835,400 848,485 863,555", "925,38 918,127 920,307 930,495 947,575",
  "280,36 552,36 655,28 740,40 827,20 925,38 1017,55", "280,127 1004,127", "280,217 738,217 1004,224",
  "280,307 738,307 828,310 920,317 1004,323", "280,398 835,400 920,408 1004,420",
  "280,488 463,489 655,488 753,482 848,485 930,497 1004,518", "280,580 463,583 658,583",
  "280,670 460,685 555,686", "280,760 448,775 528,790 603,802",
  "280,850 365,857 448,870 523,885 603,885", "280,940 365,948 445,957 530,968 632,968 608,1030",
]);

const polar = (r: number, k: number) =>
  `${(r * Math.cos((k * Math.PI) / 8)).toFixed(1)},${(r * Math.sin((k * Math.PI) / 8)).toFixed(1)}`;
const ring = (r: number) => Array.from({ length: 17 }, (_, k) => polar(r, k)).join(" ");

/* radial refinement around a corner column; index runs clockwise from the right */
const spokeEnds = [
  "180,0", "167,70", "127,128", "67,170", "0,181", "-55,142", "-108,108", "-138,55",
  "-148,0", "-138,-55", "-106,-105", "-58,-138", "0,-147", "57,-138", "104,-105", "137,-52",
];
const meshRadial = toPath([
  ring(48), ring(91),
  ...spokeEnds.map((end, k) => `${polar(k % 2 ? 48 : 20, k)} ${polar(91, k)} ${end}`),
  "-55,142 -68,180", "-55,142 -108,108 -138,55 -148,0 -138,-55 -106,-105 -58,-138 0,-147 57,-138 104,-105 137,-52 180,-65",
  "104,-105 180,-135", "104,-105 180,0", "-108,108 -135,180", "-138,55 -193,120", "-148,0 -220,38", "-138,-55 -223,-48",
  "-106,-105 -126,-188 -165,-267 -193,-192 -126,-188", "-106,-105 -191,-128 -193,-192 -268,-163 -191,-128",
  "-165,-267 -60,-290 40,-295 124,-275 180,-232 117,-193 57,-138",
  "-60,-290 -50,-218 -58,-138", "40,-295 35,-217 0,-147", "124,-275 117,-193",
]);

const columns: [number, number, string][] = [
  [674.3, 401.3, "M0-14V0H-15"],
  [916, 401.3, "M0-15V0H16"],
  [674.3, 763.3, "M0 16V0H-15"],
];
const corners: [number, number][] = [
  [493.5, 160.5], [976, 160.5], [976, 401.5], [958.5, 444], [916, 462], [795.5, 462],
  [752.5, 479.500], [735, 522], [735, 763.5], [717, 806], [674.5, 823.5], [493.5, 823.5],
];

const slab =
  "M493.300 160.300H976V401.300L971.500 424.500L958.500 444L938.700 458L916 462H795L771 466.500L752.500 479.500L739 498.500L735 522V763.300L730.500 786.500L717.500 806L697.500 820L674.300 823.700H493.300Z";

const MeshPath = ({ d, at }: { d: string; at: string }) => (
  <path d={d} transform={`${at} scale(.33333)`} vectorEffect="non-scaling-stroke" />
);

const SlabDrawing = () => (
  <svg width="520" height="700" viewBox="480 145 520 700" fill="none" role="img" aria-label="Grundbewehrung der Decke">
    <defs>
      <clipPath id="slab"><path d={slab} /></clipPath>
    </defs>
    <path d={slab} fill="#0000ff" />
    <g stroke="#c6c6d0" strokeDasharray="1 1">
      <MeshPath d={meshLeft} at="translate(400 98)" />
      <MeshPath d={meshRight} at="translate(700 98)" />
      <MeshPath d={meshLower} at="translate(400 480)" />
      <MeshPath d={meshRadial} at="translate(916 401.300)" />
      <MeshPath d={meshRadial} at="translate(674.300 763.300)" />
    </g>
    <path d="M976 160V401M916 462H795M735 522V763M674 823.500H493" stroke="#101040" />
    <path d="M976 401.300A60.300 60.300 0 0 1 916 462M795 462A60.300 60.300 0 0 0 735 522M735 763.300A60.300 60.300 0 0 1 674.300 823.700" stroke="#111" strokeDasharray="3 1" />
    <path d="M493.500 160V153.500H976.500V160" stroke="#10e830" />
    <path d="M493 160.500H486.500V823.500H493" stroke="#8cf08c" />
    <path d="M493.500 160.500H976" stroke="#00e070" />
    <path d="M493.500 160.500V823.500" stroke="#00f020" />
    {Array.from({ length: 17 }, (_, i) => {
      const x = Math.round(507 + i * 28.4) + 0.5;
      return (
        <g key={i}>
          <path d={`M${x} 160V169`} stroke={[2, 5, 7, 10, 15].includes(i) ? "#00f020" : "#00c0a8"} />
          <path d={`M${x - 1.500} 160.500H${x + 1.500}`} stroke="#00f020" strokeWidth="2" />
        </g>
      );
    })}
    {Array.from({ length: 23 }, (_, i) => {
      const y = Math.round(174.200 + i * 28.850) + 0.5;
      return (
        <g key={i}>
          <path d={`M493 ${y}H502`} stroke={i > 12 && i % 3 ? "#00f020" : "#00c8a0"} />
          <path d={`M493.500 ${y - 1.500}V${y + 1.500}`} stroke="#00f020" strokeWidth="3" />
        </g>
      );
    })}
    {columns.map(([x, y], i) => <circle key={i} cx={x} cy={y} r="75.300" stroke="#9c6a6a" />)}
    <g clipPath="url(#slab)">
      {columns.map(([x, y], i) => <circle key={i} cx={x} cy={y} r="75.300" stroke="#800040" />)}
    </g>
    <g strokeDasharray="3 2">
      {columns.map(([x, y], i) => <circle key={i} cx={x} cy={y} r="75.300" stroke="#800010" />)}
    </g>
    {columns.map(([x, y, axes], i) => (
      <g key={i} transform={`translate(${x} ${y})`}>
        <rect x="-5.800" y="-5.800" width="12" height="12" fill="#a4a4a4" stroke="#10d890" />
        <path d={axes} stroke="#00e828" />
        <rect x="-1.500" y="-1.500" width="3" height="3" fill="#3c8c3c" />
      </g>
    ))}
    <path d="M674 435.300L704 434.700" stroke="#ff0000" strokeWidth="2" />
    <path d="M674 434.500L682 439M704 435L696 431" stroke="#ff0000" strokeWidth="1.500" />
    {corners.map(([x, y], i) => <rect key={i} x={x - 1.5} y={y - 1.5} width="3" height="3" fill="#8a1018" />)}
  </svg>
);

/* ---------- app ---------- */

export default function App() {
  return (
    <Window>
      <GlobalStyle />
      <TitleBar>
        <svg width="16" height="16" viewBox="0 0 16 16" fill="none" aria-hidden="true">
          {F("M3 6L9 1L15 4V11L10 15L5 12Z", "#6c88b0")}
          {L("M3 6L9 1L15 4V11L10 15L5 12M6 5L12 8M9 3L14 6M11 8V14", "#24364e", 1)}
          {L("M6.500 7.500H2V11Q6.500 9.500 6.500 12Q6.500 15 1 14", "#5c4400", 3)}
          {L("M6.500 7.500H2V11Q6.500 9.500 6.500 12Q6.500 15 1 14", "#f0c02c", 1.6)}
        </svg>
        <Title>RFEM 5.20.01 x64</Title>
      </TitleBar>

      <MenuBar>
        <Grip />
        <MenuLogo>
          <svg width="16" height="14" viewBox="0 0 16 14" fill="none" aria-hidden="true">
            {F("M0 0H16V14H0Z", "#1c3478")}
            {L("M0 9.500H16M7.500 2V13M10.500 2V13M7 3L1 9M7 5L4 9M11 3L16 8", "#fff", 1)}
          </svg>
        </MenuLogo>
        {menus.map(([a, key, b]) => (
          <MenuItem key={a + key + b}>{a}<u>{key}</u>{b}</MenuItem>
        ))}
      </MenuBar>

      <Tools items={mainTools} />
      <Tools items={modelTools} />

      <Workspace>
        <Navigator>
          <PaneHeader>
            <PaneTitle>Projekt-Navigator - Ergebnisse</PaneTitle>
            <PaneButton aria-label="Anheften">
              <svg width="8" height="10" viewBox="0 0 8 10" fill="none">{L("M2 .5H6M2.500 0V5M5.500 0V5M.5 5.500H7.500M4 6V9", "#50545e", 1)}</svg>
            </PaneButton>
            <PaneButton aria-label="Schließen">
              <svg width="9" height="9" viewBox="0 0 9 9" fill="none">{L("M1 1L8 8M8 1L1 8", "#50545e", 1.2)}</svg>
            </PaneButton>
          </PaneHeader>
          <TreePane>
            <TreeList>{renderNodes(tree, [], "t")}</TreeList>
            <Highlight $row={9} $rows={1} $left={61} $width={174} />
            <Highlight $row={17} $rows={4} $left={40} $width={123} />
          </TreePane>
        </Navigator>

        <View>
          <ViewCaption>{"Vorh. Grundbewehrung a-s,1,-z (oben) [cm^2/m]\nRF-BETON Flächen FA1 - Stahlbeton-Bemessung"}</ViewCaption>
          <Drawing><SlabDrawing /></Drawing>
          <ViewFooter>Max a-s,1,-z (oben): 5.24, Min a-s,1,-z (oben): 5.24 cm^2/m</ViewFooter>
        </View>

        <Panel>
          <PaneHeader><PaneTitle>Panel</PaneTitle></PaneHeader>
          <PanelBody>
            <Quantity>Vorh. Grundbewehrung</Quantity>
            <Quantity>a<Low>s,1,-z (oben)</Low> [cm<sup>2</sup> /m]</Quantity>
            <Legend>
              <svg width="33" height="195" viewBox="0 0 33 195" fill="none" aria-hidden="true">
                {L("M.5.5H27.500V194H.5Z", "#000", 1, "#0000ff")}
                {L("M27 .5H33M27 194H33", "#000")}
              </svg>
              <span>5.24</span>
            </Legend>
            <Extremes>
              <dt>Max</dt><span>:</span><dd>5.24</dd>
              <dt>Min</dt><span>:</span><dd>5.24</dd>
            </Extremes>
            <ModuleButton>RF-BETON Flächen</ModuleButton>
            <FilterButton aria-label="Werte filtern">
              <svg width="18" height="18" viewBox="0 0 18 18" fill="none">
                {L("M1 2.500H13M1 4.500H13M1 6.500H13M1 8.500H6M1 10.500H6M1 12.500H6", "#555")}
                <Lens x={10} y={9} />
              </svg>
            </FilterButton>
          </PanelBody>
          <PanelTabs role="tablist">
            <PanelTab role="tab" $active aria-label="Farbskala">
              <svg width="14" height="16" viewBox="0 0 14 16" fill="none">
                {["#ff1010", "#ffa010", "#10e010", "#10e0f0", "#1010ff"].map((c, i) => (
                  <Fragment key={c}>
                    <rect x=".5" y={i * 3 + 0.5} width="7" height="3" fill={c} stroke="#444" strokeWidth=".5" />
                    <rect x="9.500" y={i * 3 + 1} width="3" height="2" stroke="#555" />
                  </Fragment>
                ))}
              </svg>
            </PanelTab>
            <PanelTab role="tab" aria-label="Faktoren">
              <svg width="16" height="14" viewBox="0 0 16 14" fill="none">
                {L("M2 3H14M8 1V12M4 12.500H12M3.500 3L1 9M3.500 3L6 9M12.500 3L10 9M12.500 3L15 9", "#4c4020", 1)}
                {F("M0 8H7L5 11H2ZM9 8H16L14 11H11Z", "#c8a850")}
                {F("M7 0H9V12H7Z", "#b89840")}
              </svg>
            </PanelTab>
            <PanelTab role="tab" aria-label="Filter">
              <svg width="16" height="16" viewBox="0 0 18 18" fill="none"><Microscope /></svg>
            </PanelTab>
          </PanelTabs>
        </Panel>
      </Workspace>
    </Window>
  );
}
